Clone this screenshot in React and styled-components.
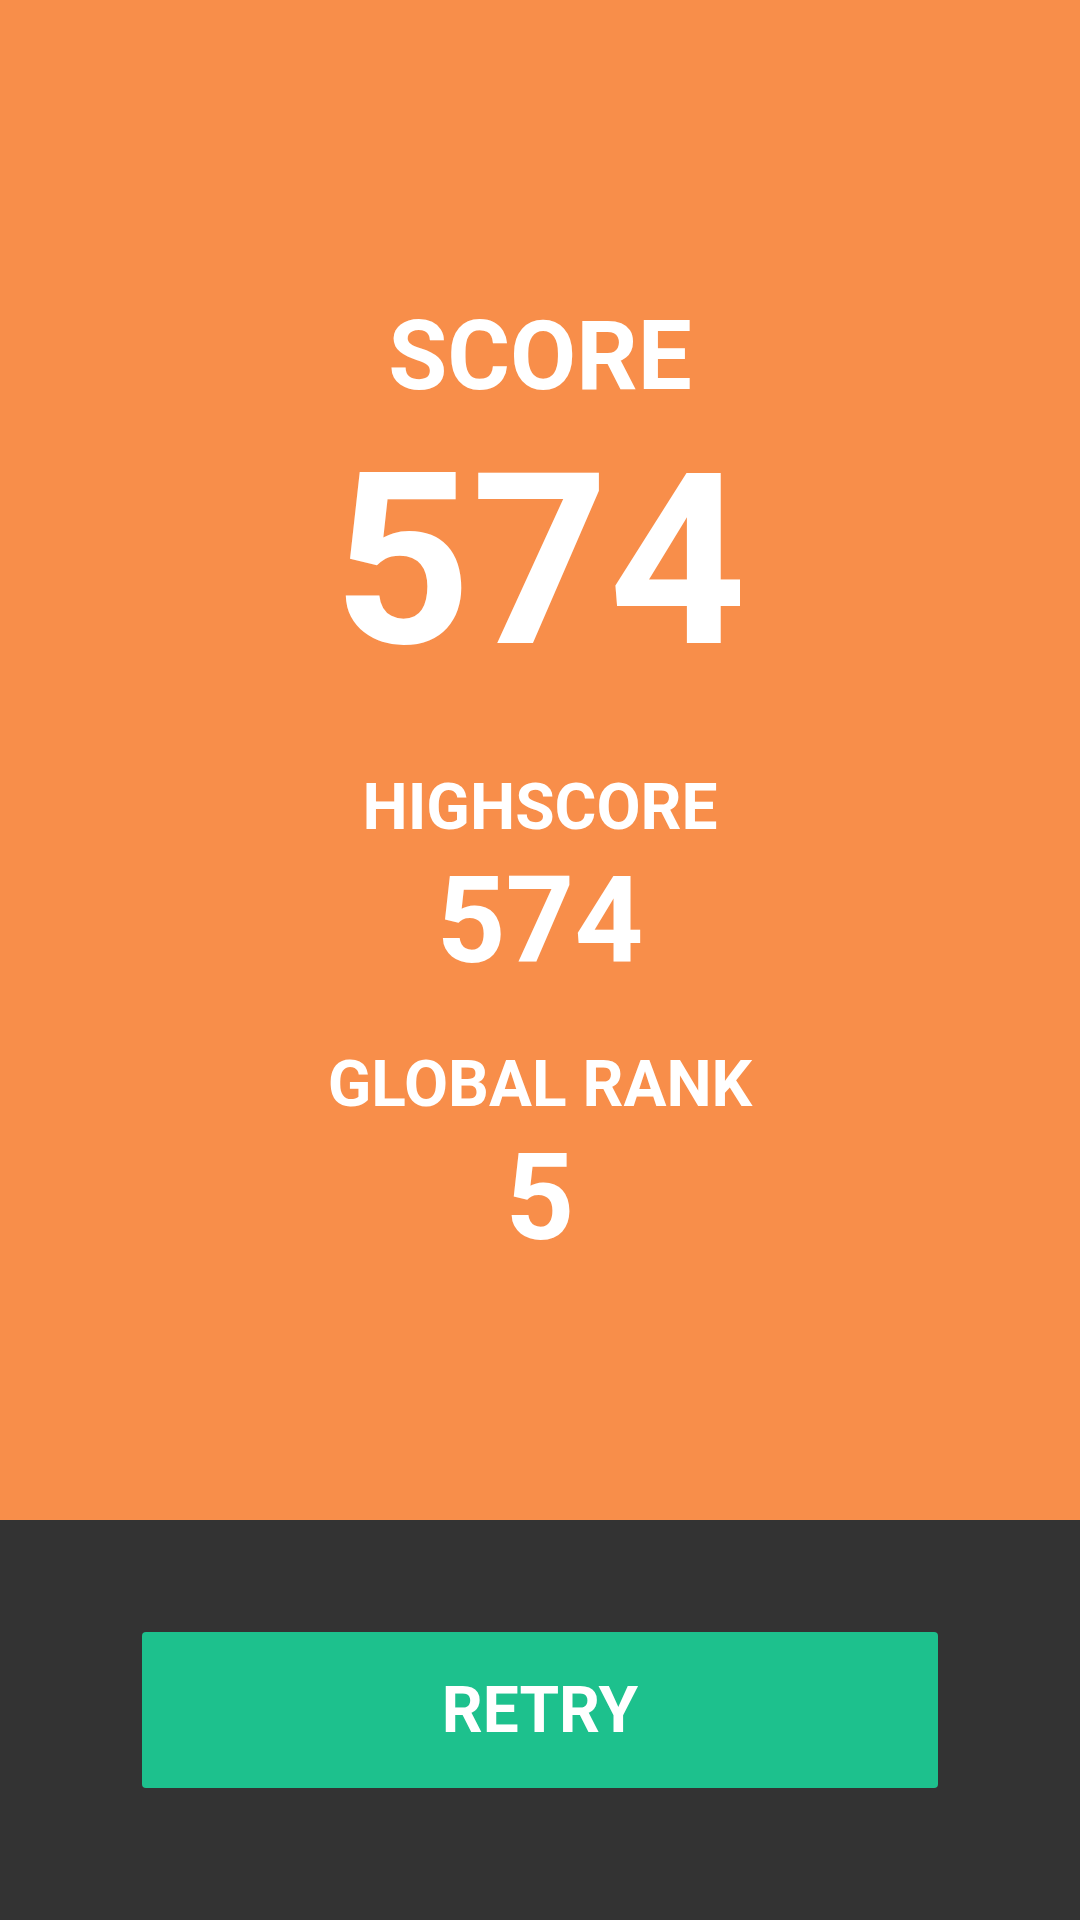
import React from "react";
import styled, { createGlobalStyle } from "styled-components";

const GlobalStyle = createGlobalStyle`
	html, body {
		margin: 0;
		padding: 0;
	}
	body {
		font-family: Roboto, "Liberation Sans", sans-serif;
		background: #333333;
	}
`;

const Screen = styled.div`
	width: 1080px;
	height: 1920px;
	display: flex;
	flex-direction: column;
`;

const ScorePanel = styled.section`
	height: 1520px;
	background: #f88e4a;
	display: flex;
	flex-direction: column;
	align-items: center;
	padding-top: 308px;
	box-sizing: border-box;
	color: #ffffff;
`;

const Label = styled.div`
	font-size: ${(p) => p.size}px;
	font-weight: 700;
	line-height: 1;
	margin-top: ${(p) => p.gap || 0}px;
`;

const Value = styled.div`
	font-size: ${(p) => p.size}px;
	font-weight: 700;
	line-height: 1;
	margin-top: ${(p) => p.gap}px;
`;

const Footer = styled.footer`
	flex: 1;
	background: #333333;
	display: flex;
	justify-content: center;
	padding-top: 112px;
	box-sizing: border-box;
`;

const RetryButton = styled.button`
	width: 796px;
	height: 156px;
	border: none;
	border-radius: 4px;
	background: #1dc18d;
	color: #ffffff;
	font-family: Roboto, "Liberation Sans", sans-serif;
	font-size: 64px;
	font-weight: 700;
	cursor: pointer;
	padding: 0;
`;

function App() {
	return (
		<Screen>
			<GlobalStyle />
			<ScorePanel>
				<Label size={96}>SCORE</Label>
				<Value size={240} gap={37}>574</Value>

				<Label size={64} gap={95}>HIGHSCORE</Label>
				<Value size={120} gap={21}>574</Value>

				<Label size={64} gap={72}>GLOBAL RANK</Label>
				<Value size={120} gap={21}>5</Value>
			</ScorePanel>
			<Footer>
				<RetryButton>RETRY</RetryButton>
			</Footer>
		</Screen>
	);
}

export default App;
